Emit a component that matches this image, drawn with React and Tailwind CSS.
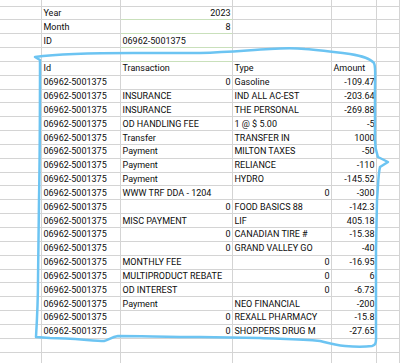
const ID = "06962-5001375";

// [B, C, D, E]; a string starting with "#" is right aligned
const rows = [
  ["Year", "#2023", "", ""],
  ["Month", "#8", "", ""],
  ["ID", ID, "", ""],
  ["", "", "", ""],
  ["Id", "Transaction", "Type", "Amount"],
  [ID, "#0", "Gasoline", "#-109.47"],
  [ID, "INSURANCE", "IND ALL AC-EST", "#-203.64"],
  [ID, "INSURANCE", "THE PERSONAL", "#-269.88"],
  [ID, "OD HANDLING FEE", "1 @ $ 5.00", "#-5"],
  [ID, "Transfer", "TRANSFER IN", "#1000"],
  [ID, "Payment", "MILTON TAXES", "#-50"],
  [ID, "Payment", "RELIANCE", "#-110"],
  [ID, "Payment", "HYDRO", "#-145.52"],
  [ID, "WWW TRF DDA - 1204", "#0", "#-300"],
  [ID, "#0", "FOOD BASICS 88", "#-142.3"],
  [ID, "MISC PAYMENT", "LIF", "#405.18"],
  [ID, "#0", "CANADIAN TIRE #", "#-15.38"],
  [ID, "#0", "GRAND VALLEY GO", "#-40"],
  [ID, "MONTHLY FEE", "#0", "#-16.95"],
  [ID, "MULTIPRODUCT REBATE", "#0", "#6"],
  [ID, "OD INTEREST", "#0", "#-6.73"],
  [ID, "Payment", "NEO FINANCIAL", "#-200"],
  [ID, "#0", "REXALL PHARMACY", "#-15.8"],
  [ID, "#0", "SHOPPERS DRUG M", "#-27.65"],
  ["", "", "", ""],
  ["", "", "", ""],
];

const Cell = ({ w, value = "", green }) => {
  const right = value.startsWith("#");
  const text = right ? value.slice(1) : value;
  return (
    <div
      className={`${w} shrink-0 h-full border-r border-b border-r-[#d4d4d4] ${
        green ? "border-b-[#c9e0bb]" : "border-b-[#d4d4d4]"
      } flex items-center pt-[1px] px-[1.5px] whitespace-nowrap ${right ? "justify-end" : "justify-start"}`}
    >
      {text}
    </div>
  );
};

const Row = ({ cells, height, greenC }) => (
  <div className={`flex ${height}`}>
    <Cell w="w-[42px]" />
    <Cell w="w-[79px]" value={cells[0]} />
    <Cell w="w-[112px]" value={cells[1]} green={greenC} />
    <Cell w="w-[99px]" value={cells[2]} />
    <Cell w="w-[45px]" value={cells[3]} />
    <Cell w="flex-1" />
  </div>
);

export default function App() {
  return (
    <div
      className="relative w-[400px] h-[363px] overflow-hidden bg-white text-[9px] leading-none text-[#0d0d0d]"
      style={{ fontFamily: "Roboto, 'Liberation Sans', sans-serif" }}
    >
      <Row cells={["", "", "", ""]} height="h-[6.5px]" />
      {rows.map((r, i) => (
        <Row key={i} cells={r} height="h-[13.85px]" greenC={i < 4} />
      ))}

      {/* hand-drawn marker loop */}
      <svg className="absolute inset-0 pointer-events-none" width="400" height="363" viewBox="0 0 400 363">
        <path
          d="M35,57 C50,55 90,53 133,53 L200,53 C230,52 250,50 270,49 C285,48 295,48 305,49 C320,50 335,52 350,54 C362,56 370,58 374,63 C376,67 375,75 375,90 L375,140 C375,150 377,154 378,157 L388,162 L380,167 C378,175 378,190 377,200 L376,250 L376,330 C376,340 377,345 372,346 C365,347 355,347 345,346 C335,345 328,343 320,341 C300,339 280,339 260,338 L200,337 C170,337 140,336 118,336 C112,337 108,340 104,341 C95,341 70,338 50,338 L36,337 C37,320 38,300 38,280 L39,200 C40,150 40,100 40,60 Z"
          fill="none"
          stroke="#6cc4f2"
          strokeWidth="2.5"
          strokeLinejoin="round"
        />
      </svg>
    </div>
  );
}
